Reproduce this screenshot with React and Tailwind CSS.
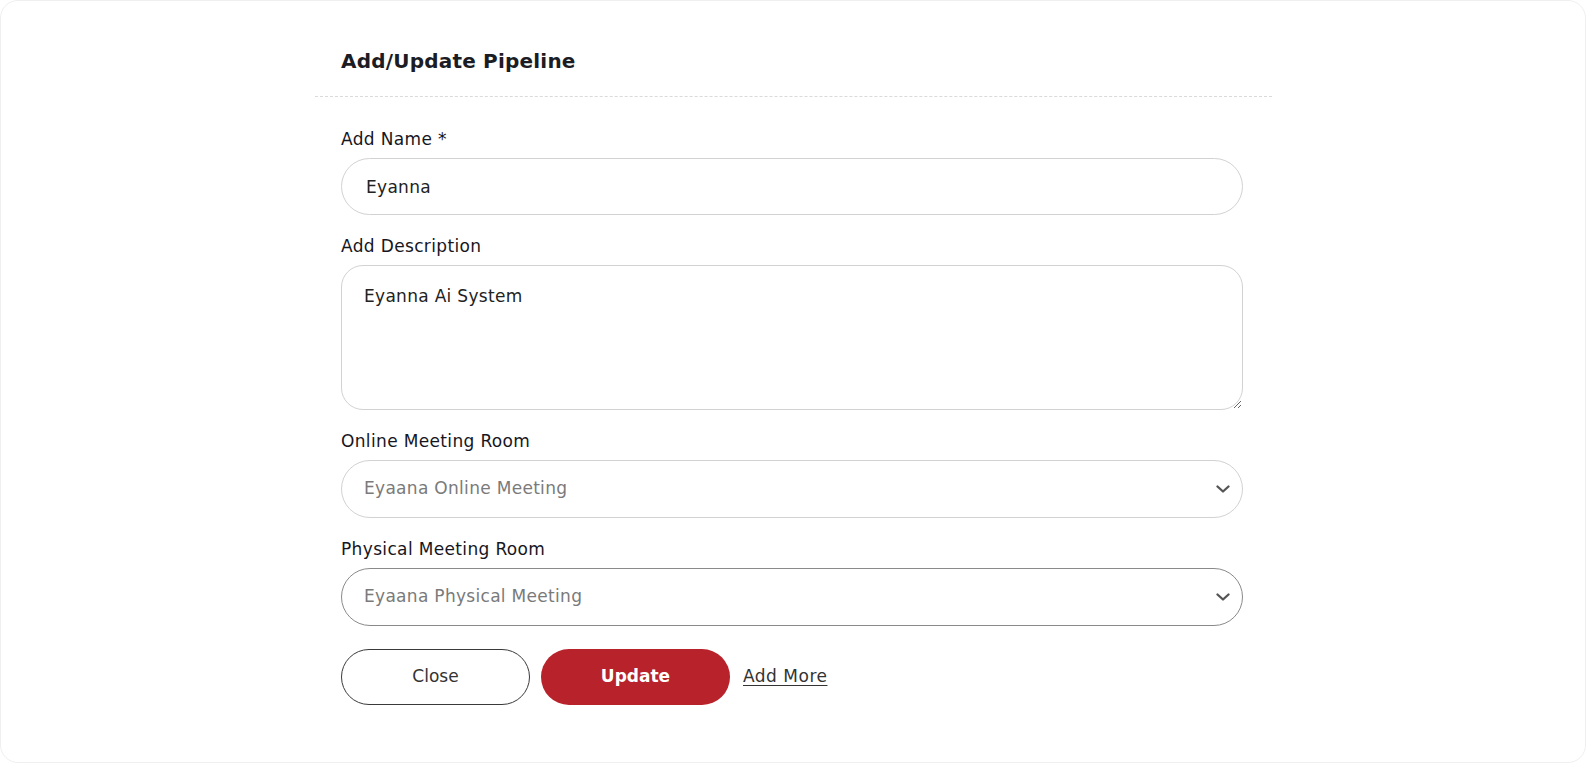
import React, { useState } from 'react';

const Chevron = () => (
  <svg width="14" height="8" viewBox="0 0 14 8" fill="none" stroke="#555" strokeWidth="2.3" strokeLinecap="round" strokeLinejoin="round">
    <path d="M1.5 1.5L7 6.5l5.5-5" />
  </svg>
);

const Label = ({ children }) => (
  <label className='block text-[17px] leading-[24px] tracking-[0.35px] text-[#16161e] mb-[7px]'>{children}</label>
);

const SelectBox = ({ value, focused }) => (
  <div className={`flex items-center justify-between h-[58px] rounded-full border pl-[22px] pr-[12px] ${focused ? 'border-[#8a8a8a]' : 'border-[#d2d2d2]'}`}>
    <span className='text-[17px] tracking-[0.3px] text-[#7a7a7a]'>{value}</span>
    <Chevron />
  </div>
);

const App = () => {
  const [name, setName] = useState("Eyanna");
  const [desc, setDesc] = useState("Eyanna Ai System");

  return (
    <div className="min-h-screen w-full bg-white font-['DejaVu_Sans',sans-serif]">
      <div className='h-[763px] w-full rounded-[18px] border border-[#efefef] bg-white pt-[29px]'>
        <div className='w-[957px] ml-[314px] bg-white'>
          {/* header */}
          <div className='h-[67px] flex items-center pl-[26px] pb-[4px] border-b border-dashed border-[#dadada]'>
            <h1 className='text-[20px] font-bold tracking-[0.2px] text-[#1c1c24]'>Add/Update Pipeline</h1>
          </div>

          <div className='pl-[26px] pr-[29px] pt-[30px]'>
            <Label>Add Name *</Label>
            <input
              value={name}
              onChange={e => setName(e.target.value)}
              className='w-full h-[57px] rounded-full border border-[#d2d2d2] px-[24px] text-[17px] tracking-[0.3px] text-[#222] outline-none'
            />

            <div className='mt-[19px]'>
              <Label>Add Description</Label>
              <textarea
                value={desc}
                onChange={e => setDesc(e.target.value)}
                className='block w-full h-[145px] rounded-[22px] border border-[#d2d2d2] px-[22px] pt-[18px] text-[17px] leading-[24px] tracking-[0.3px] text-[#222] outline-none'
              />
            </div>

            <div className='mt-[19px]'>
              <Label>Online Meeting Room</Label>
              <SelectBox value="Eyaana Online Meeting" />
            </div>

            <div className='mt-[19px]'>
              <Label>Physical Meeting Room</Label>
              <SelectBox value="Eyaana Physical Meeting" focused />
            </div>

            {/* actions */}
            <div className='flex items-center mt-[23px]'>
              <button className='w-[189px] h-[56px] rounded-full border border-[#3a3a3a] text-[17px] text-[#333]'>Close</button>
              <button className='ml-[11px] w-[189px] h-[56px] rounded-full bg-[#b8222a] text-[17px] font-bold text-white'>Update</button>
              <a href="#" className='ml-[13px] text-[17px] tracking-[0.5px] text-[#333] underline underline-offset-[3px]'>Add More</a>
            </div>
          </div>
        </div>
      </div>
    </div>
  );
};

export default App;
